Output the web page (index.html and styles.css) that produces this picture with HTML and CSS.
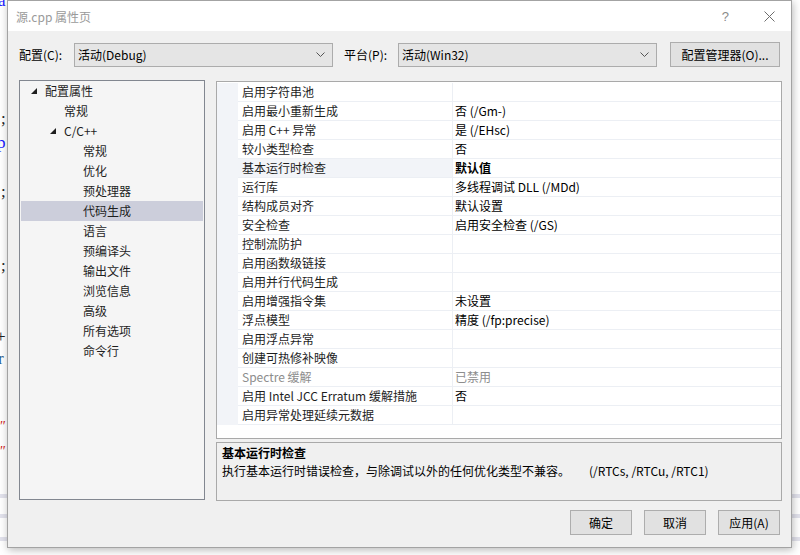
FILE: index.html
```html
<!DOCTYPE html>
<html lang="zh">
<head>
<meta charset="utf-8">
<title>源.cpp 属性页</title>
<link rel="stylesheet" href="styles.css">
</head>
<body>
<div class="desk">
  <div class="editor">
    <span class="frag blue f-a">a</span>
    <span class="frag dark f-s1">;</span>
    <span class="frag blue f-p">p</span>
    <span class="frag dark f-s2">;</span>
    <span class="frag dark f-s3">;</span>
    <span class="frag dark f-plus">+</span>
    <span class="frag slate f-r">r</span>
    <span class="frag red f-q1">″</span>
    <span class="frag red f-q2">″</span>
    <span class="bar b1"></span>
    <span class="bar b2"></span>
    <span class="bar b3"></span>
  </div>

  <div class="dialog">
    <div class="titlebar">
      <span class="title">源.cpp 属性页</span>
      <span class="help">?</span>
      <svg class="close" width="11" height="11" viewBox="0 0 11 11"><path d="M0.5 0.5 L10.5 10.5 M10.5 0.5 L0.5 10.5" stroke="#6d6d6d" stroke-width="1" fill="none"/></svg>
    </div>

    <div class="body">
      <div class="toprow">
        <span class="lbl">配置(C):</span>
        <div class="combo">
          <span>活动(Debug)</span>
          <svg class="chev" width="9" height="6" viewBox="0 0 9 6"><polyline points="0.5,0.5 4.5,4.5 8.5,0.5" stroke="#555" stroke-width="1" fill="none"/></svg>
        </div>
        <span class="lbl lbl2">平台(P):</span>
        <div class="combo">
          <span>活动(Win32)</span>
          <svg class="chev" width="9" height="6" viewBox="0 0 9 6"><polyline points="0.5,0.5 4.5,4.5 8.5,0.5" stroke="#555" stroke-width="1" fill="none"/></svg>
        </div>
        <button class="btn btn-mgr">配置管理器(O)...</button>
      </div>

      <div class="main">
        <div class="tree">
          <div class="node lv0"><svg class="tri" width="6" height="6" viewBox="0 0 6 6"><polygon points="6,0 6,6 0,6" fill="#1e1e1e"/></svg>配置属性</div>
          <div class="node lv1">常规</div>
          <div class="node lv1"><svg class="tri" width="6" height="6" viewBox="0 0 6 6"><polygon points="6,0 6,6 0,6" fill="#1e1e1e"/></svg>C/C++</div>
          <div class="node lv2">常规</div>
          <div class="node lv2">优化</div>
          <div class="node lv2">预处理器</div>
          <div class="node lv2 sel">代码生成</div>
          <div class="node lv2">语言</div>
          <div class="node lv2">预编译头</div>
          <div class="node lv2">输出文件</div>
          <div class="node lv2">浏览信息</div>
          <div class="node lv2">高级</div>
          <div class="node lv2">所有选项</div>
          <div class="node lv2">命令行</div>
        </div>

        <div class="right">
          <div class="grid">
            <div class="row"><span class="gut"></span><span class="name">启用字符串池</span><span class="val"></span></div>
            <div class="row"><span class="gut"></span><span class="name">启用最小重新生成</span><span class="val">否 (/Gm-)</span></div>
            <div class="row"><span class="gut"></span><span class="name">启用 C++ 异常</span><span class="val">是 (/EHsc)</span></div>
            <div class="row"><span class="gut"></span><span class="name">较小类型检查</span><span class="val">否</span></div>
            <div class="row cur"><span class="gut"></span><span class="name">基本运行时检查</span><span class="val bold">默认值</span></div>
            <div class="row"><span class="gut"></span><span class="name">运行库</span><span class="val">多线程调试 DLL (/MDd)</span></div>
            <div class="row"><span class="gut"></span><span class="name">结构成员对齐</span><span class="val">默认设置</span></div>
            <div class="row"><span class="gut"></span><span class="name">安全检查</span><span class="val">启用安全检查 (/GS)</span></div>
            <div class="row"><span class="gut"></span><span class="name">控制流防护</span><span class="val"></span></div>
            <div class="row"><span class="gut"></span><span class="name">启用函数级链接</span><span class="val"></span></div>
            <div class="row"><span class="gut"></span><span class="name">启用并行代码生成</span><span class="val"></span></div>
            <div class="row"><span class="gut"></span><span class="name">启用增强指令集</span><span class="val">未设置</span></div>
            <div class="row"><span class="gut"></span><span class="name">浮点模型</span><span class="val">精度 (/fp:precise)</span></div>
            <div class="row"><span class="gut"></span><span class="name">启用浮点异常</span><span class="val"></span></div>
            <div class="row"><span class="gut"></span><span class="name">创建可热修补映像</span><span class="val"></span></div>
            <div class="row dis"><span class="gut"></span><span class="name">Spectre 缓解</span><span class="val">已禁用</span></div>
            <div class="row"><span class="gut"></span><span class="name">启用 Intel JCC Erratum 缓解措施</span><span class="val">否</span></div>
            <div class="row"><span class="gut"></span><span class="name">启用异常处理延续元数据</span><span class="val"></span></div>
          </div>
          <div class="desc">
            <div class="desc-title">基本运行时检查</div>
            <div class="desc-text">执行基本运行时错误检查，与除调试以外的任何优化类型不兼容。<span class="flags">(/RTCs, /RTCu, /RTC1)</span></div>
          </div>
        </div>
      </div>

      <div class="buttons">
        <button class="btn btn-act">确定</button>
        <button class="btn btn-act">取消</button>
        <button class="btn btn-act">应用(A)</button>
      </div>
    </div>
  </div>
</div>
</body>
</html>
```

FILE: styles.css
```css
* { box-sizing: border-box; }

html, body {
  margin: 0;
  padding: 0;
  background: #ffffff;
}

body {
  font-family: "Microsoft YaHei UI", "Noto Sans CJK SC", "Noto Sans", sans-serif;
  font-size: 12px;
  color: #000;
}

.desk {
  position: relative;
  width: 800px;
  height: 555px;
  overflow: hidden;
  background: #ffffff;
}

/* background code editor fragments */
.editor {
  position: absolute;
  left: 0;
  top: 0;
  width: 800px;
  height: 555px;
}

.frag {
  position: absolute;
  font-family: "Liberation Serif", serif;
  font-size: 17px;
  line-height: 17px;
}
.blue { color: #1a1aff; }
.dark { color: #222; }
.slate { color: #2b5a8a; }
.red { color: #d02020; font-size: 14px; }

.f-a { left: -2px; top: -8px; }
.f-s1 { left: 1px; top: 110px; }
.f-p { left: -3px; top: 134px; }
.f-s2 { left: 1px; top: 183px; }
.f-s3 { left: 1px; top: 257px; }
.f-plus { left: -4px; top: 328px; }
.f-r { left: -2px; top: 350px; }
.f-q1 { left: 0px; top: 418px; }
.f-q2 { left: 0px; top: 443px; }

.bar {
  position: absolute;
  left: 0;
  width: 800px;
  height: 4px;
  background: #e2e2ec;
}
.b1 { top: 494px; }
.b2 { top: 514px; }
.b3 { top: 537px; }

/* dialog window */
.dialog {
  position: absolute;
  left: 7px;
  top: 0;
  width: 785px;
  height: 548px;
  border: 1px solid #a3a3a3;
  background: #f0f0f0;
  box-shadow: 1px 2px 8px rgba(0, 0, 0, 0.28);
  display: flex;
  flex-direction: column;
}

.titlebar {
  height: 30px;
  background: #ffffff;
  display: flex;
  align-items: center;
  padding-left: 8px;
  padding-right: 16px;
}

.title {
  color: #9a9a9a;
  font-size: 12px;
  flex: 1;
}

.help {
  color: #8a8a8a;
  font-family: "Liberation Sans", sans-serif;
  font-size: 13px;
  margin-right: 35px;
}

.close {
  display: block;
}

.body {
  flex: 1;
  display: flex;
  flex-direction: column;
  padding: 11px 9px 0 11px;
}

.toprow {
  display: flex;
  align-items: center;
  height: 25px;
  margin-right: 2px;
}

.lbl {
  width: 55px;
  color: #000;
}

.lbl2 {
  margin-left: 11px;
  width: 54px;
}

.combo {
  width: 259px;
  height: 24px;
  border: 1px solid #acacac;
  background: #e5e5e5;
  display: flex;
  align-items: center;
  padding: 0 6px 0 3px;
}
.combo span { flex: 1; }
.chev { display: block; margin-right: 1px; }

.btn {
  font-family: inherit;
  font-size: 12px;
  color: #000;
  background: #e1e1e1;
  border: 1px solid #adadad;
  height: 25px;
  padding: 0;
  border-radius: 0;
}

.btn-mgr {
  margin-left: auto;
  width: 110px;
}

.main {
  display: flex;
  margin-top: 13px;
  gap: 11px;
}

.tree {
  width: 186px;
  height: 420px;
  border: 1px solid #828790;
  background: #f5f5f5;
  padding: 0 0;
}

.node {
  height: 20px;
  line-height: 20px;
  position: relative;
  white-space: nowrap;
  color: #1e1e1e;
  margin: 0 0 0 1px;
  width: 182px;
}
.lv0 { padding-left: 24px; }
.lv1 { padding-left: 43px; }
.lv2 { padding-left: 62px; }

.tri {
  position: absolute;
  top: 7px;
}
.lv0 .tri { left: 10px; }
.lv1 .tri { left: 29px; }

.node.sel {
  background: #cccedb;
}

.right {
  width: 566px;
  height: 420px;
  margin-top: 1px;
  display: flex;
  flex-direction: column;
  gap: 3px;
}

.grid {
  height: 358px;
  border: 1px solid #a9a9a9;
  background: #ffffff;
  padding-top: 1px;
}

.row {
  display: flex;
  height: 19px;
  line-height: 18px;
  white-space: nowrap;
}

.gut {
  width: 21px;
  background: #f2f4f8;
}

.name {
  width: 215px;
  padding-left: 4px;
  border-right: 1px solid #eceff4;
  border-bottom: 1px solid #eceff4;
  color: #1e1e1e;
}

.val {
  flex: 1;
  padding-left: 2px;
  border-bottom: 1px solid #eceff4;
  color: #000;
}

.row.cur .name { background: #f2f4f8; }
.bold { font-weight: bold; }

.row.dis .name,
.row.dis .val { color: #8d8d8d; }

.desc {
  height: 59px;
  border: 1px solid #a9a9a9;
  background: #f0f0f0;
  padding: 1px 5px;
  line-height: 18px;
}

.desc-title { font-weight: bold; }

.flags { margin-left: 19px; }

.buttons {
  display: flex;
  justify-content: flex-end;
  gap: 12px;
  margin-top: 9px;
  margin-right: 2px;
}

.btn-act { width: 62px; }
```
